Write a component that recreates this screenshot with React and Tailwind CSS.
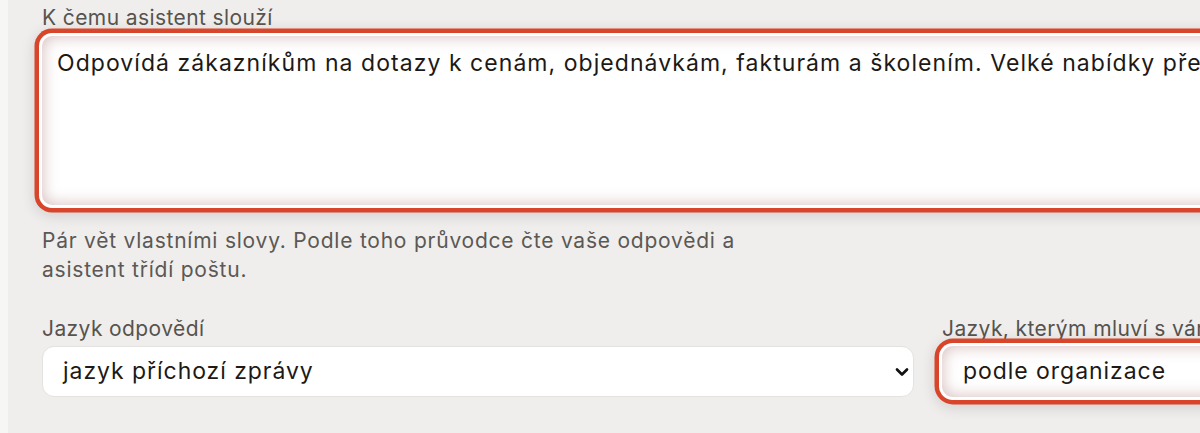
import React from "react";
import { ChevronDown } from "lucide-react";

const ringed =
  "shadow-[inset_0_0_16px_rgba(150,80,80,0.4),0_0_0_3px_#ffffff,0_0_0_7.5px_#d8452b,0_3px_14px_8px_rgba(0,0,0,0.12)]";

const Label = ({ children }) => (
  <div className="text-[21px] leading-[28px] tracking-[0.4px] text-[#57534e] whitespace-nowrap">
    {children}
  </div>
);

export default function App() {
  return (
    <div
      className="h-[433px] overflow-hidden bg-[#f6f6f5]"
      style={{ fontFamily: "Inter, 'Noto Sans', sans-serif" }}
    >
      <div className="ml-2 h-full w-[1900px] bg-[#efeeec] pl-[34px] pt-[4px]">
        <div className="w-[1772px]">
          {/* What the assistant is for */}
          <Label>K čemu asistent slouží</Label>
          <div
            className={`mt-[4px] h-[169px] rounded-[10px] bg-white px-[15px] py-[12px] text-[23px] leading-[30px] tracking-[1.05px] text-[#1c1917] whitespace-nowrap ${ringed}`}
          >
            Odpovídá zákazníkům na dotazy k cenám, objednávkám, fakturám a školením. Velké nabídky předává obchodnímu oddělení.
          </div>
          <p className="mt-[21px] max-w-[735px] text-[21px] leading-[29px] tracking-[0.77px] text-[#5b5855]">
            Pár vět vlastními slovy. Podle toho průvodce čte vaše odpovědi a asistent třídí poštu.
          </p>

          {/* Languages */}
          <div className="mt-[31px] grid grid-cols-[872px_872px] gap-x-[28px]">
            <div>
              <Label>Jazyk odpovědí</Label>
              <div className="mt-[3px] flex h-[51px] items-center justify-between rounded-[12px] border border-[#e4e2df] bg-white pl-[20px] pr-[1px] text-[23px] tracking-[0.95px] text-[#1c1917]">
                <span>jazyk příchozí zprávy</span>
                <ChevronDown size={20} strokeWidth={3.2} className="text-[#111]" />
              </div>
            </div>
            <div>
              <Label>Jazyk, kterým mluví s vámi organizace</Label>
              <div
                className={`relative mt-[3px] flex h-[51px] items-center rounded-[11px] bg-white pl-[21px] text-[23px] tracking-[0.95px] text-[#1c1917] ${ringed}`}
              >
                <span>podle organizace</span>
              </div>
            </div>
          </div>
        </div>
      </div>
    </div>
  );
}
